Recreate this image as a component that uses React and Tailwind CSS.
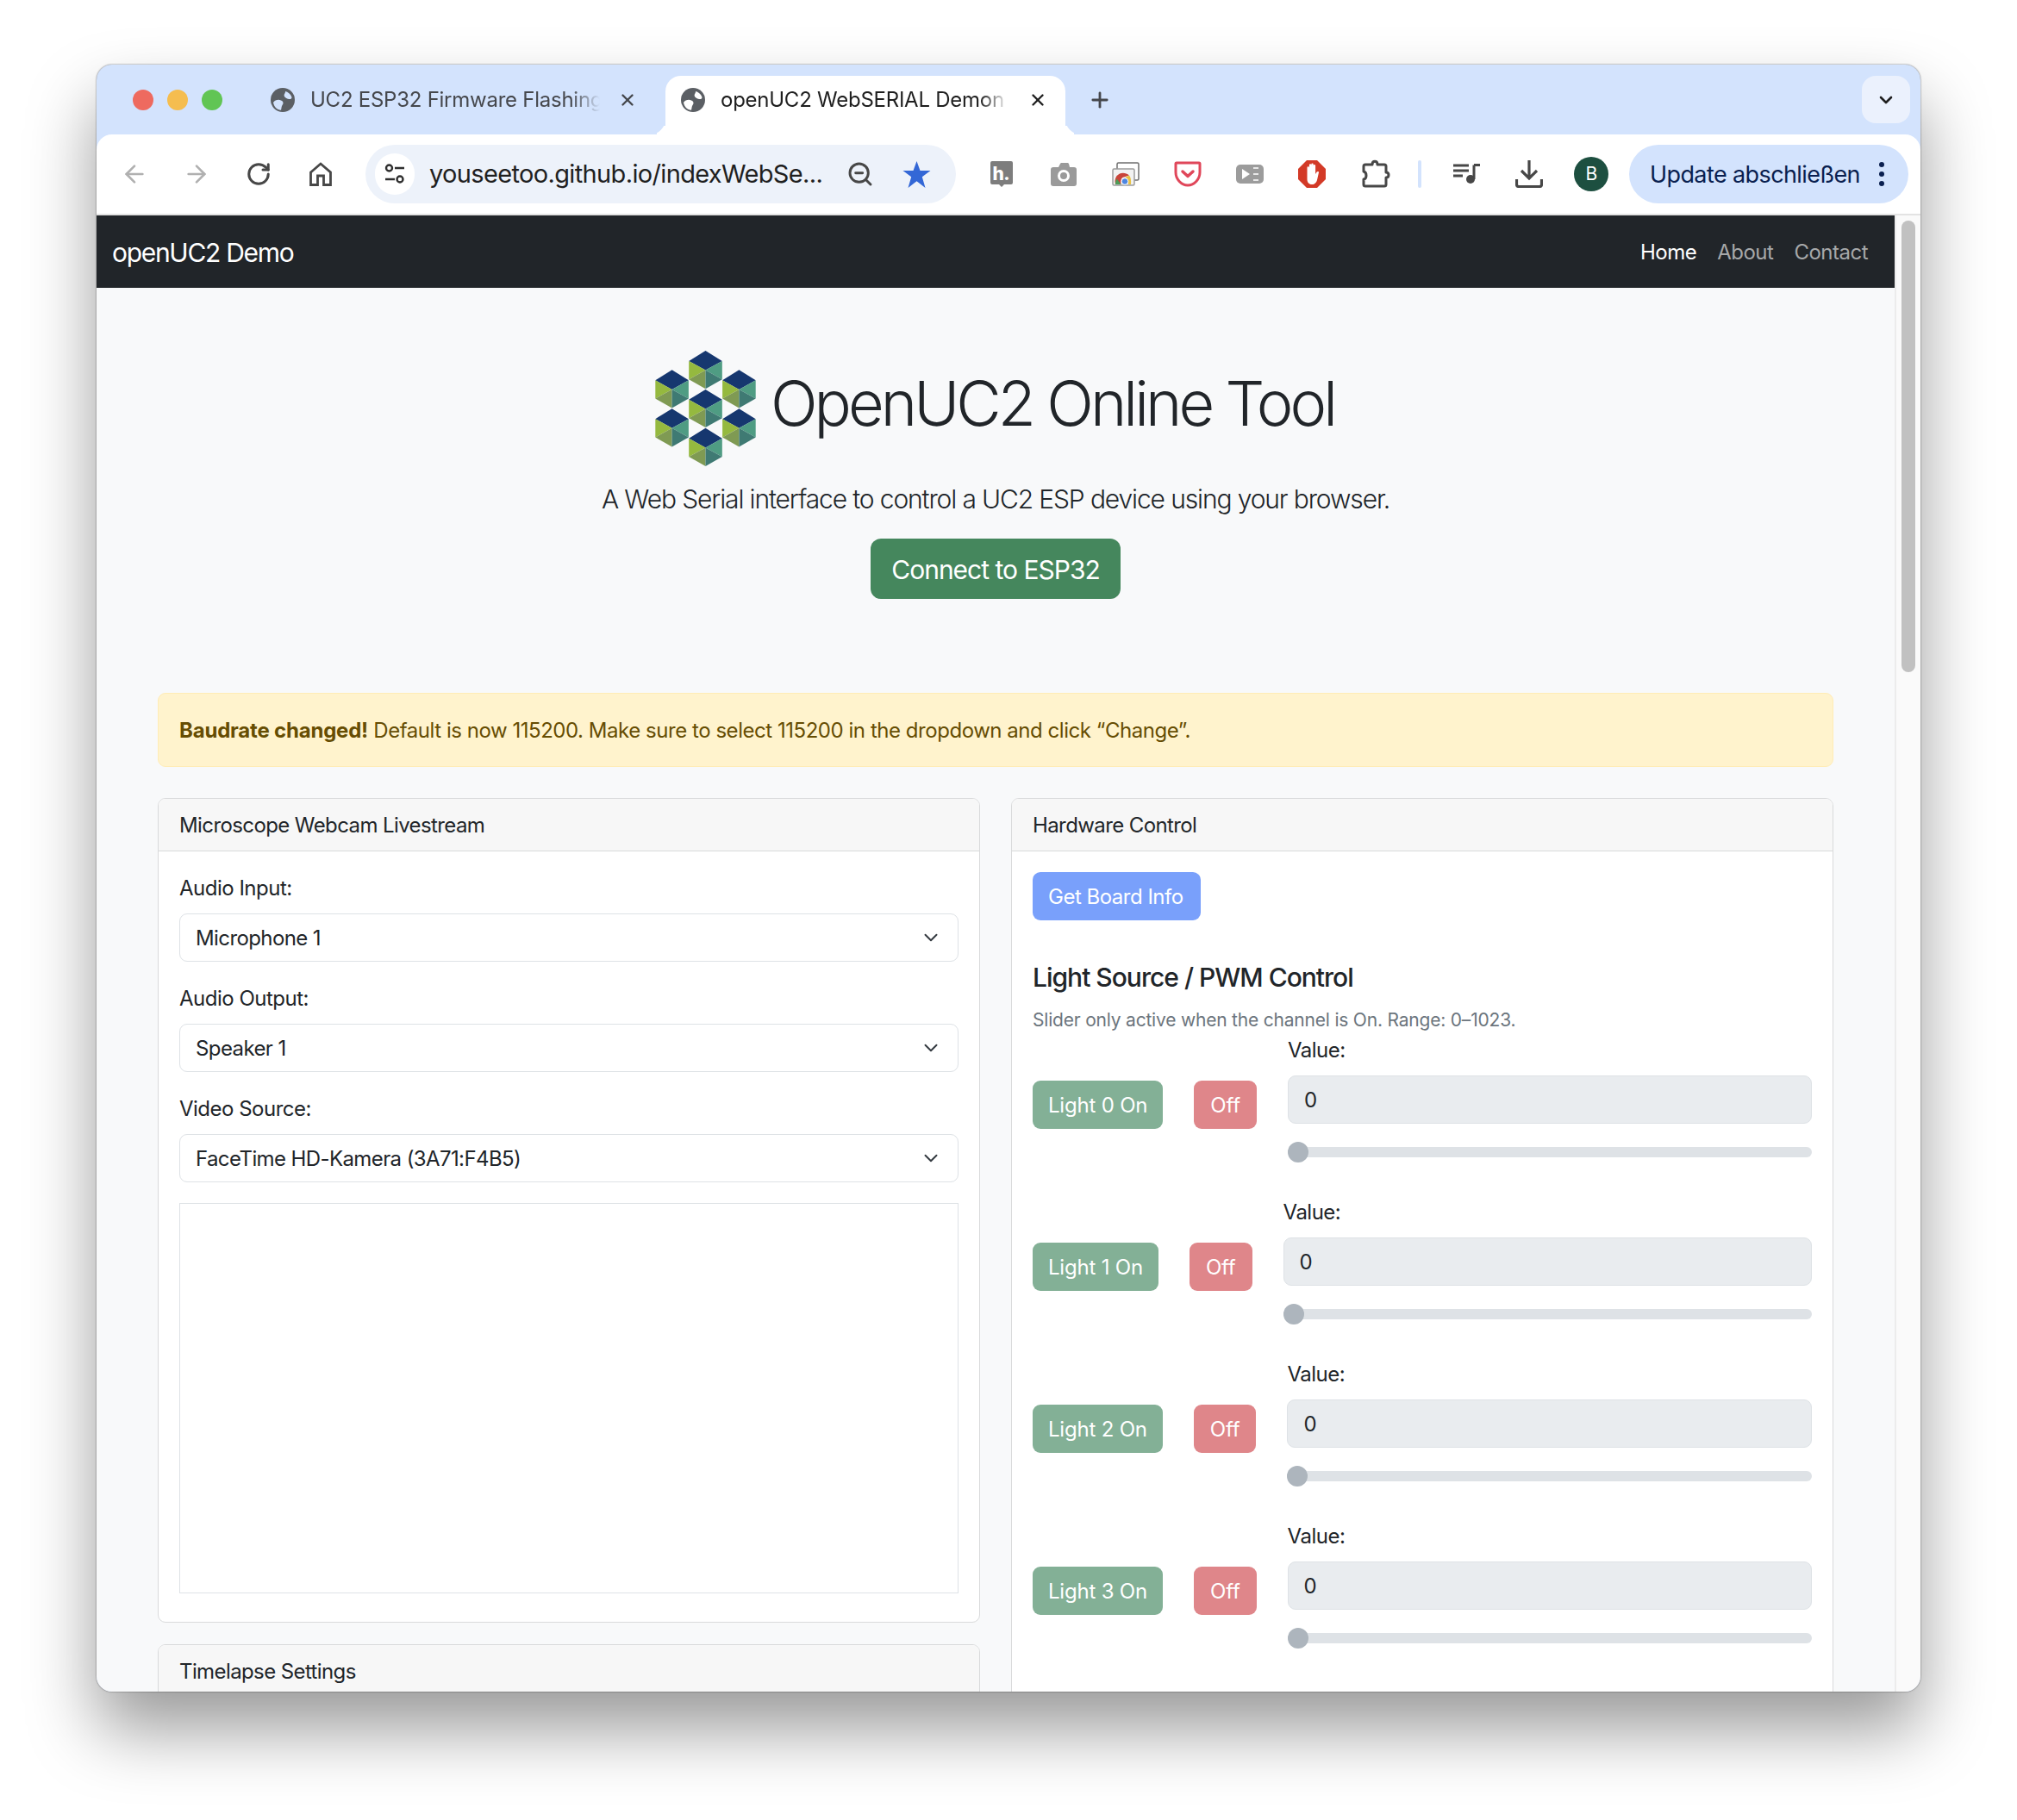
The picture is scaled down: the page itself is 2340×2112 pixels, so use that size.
import React from 'react';
import { ArrowLeft, ArrowRight, RotateCw, ChevronDown, ZoomOut, Plus, X } from 'lucide-react';

// --- browser chrome icons ---
const Globe = ({ cut }) => (
    <svg width="28" height="28" viewBox="0 0 28 28" className="shrink-0">
        <circle cx="14" cy="14" r="14" fill="#5b5f64" />
        <path d="M3 17c2-3 6-4 9-2.6 3 1.2 3 3.6 1.6 5.4-1.2 1.8-1 4-1.6 6C7.400 25.600 4 22 3 17z" fill={cut} />
        <path d="M17 4c3 .6 6 3 7.400 6.400.4 2-1.400 3-3.400 2.600-2.400-.6-5-1.800-5.400-4C15.400 7 17.400 6 17 4z" fill={cut} />
    </svg>
);

const HIcon = () => (
    <svg width="28" height="32" viewBox="0 0 28 32">
        <path d="M3 1h22a2 2 0 0 1 2 2v23a2 2 0 0 1-2 2h-8l-3 3-3-3H3a2 2 0 0 1-2-2V3a2 2 0 0 1 2-2z" fill="#7d7d7d" />
        <text x="3.500" y="23" fontSize="21" fontWeight="800" fill="#fff" fontFamily="Inter, sans-serif">h.</text>
    </svg>
);

const CameraIcon = () => (
    <svg width="30" height="28" viewBox="0 0 30 28">
        <path d="M3 6h6l2-4c.4-.8 1-1 2-1h6c1 0 1.600.4 2 1l1 4h5a3 3 0 0 1 3 3v16a3 3 0 0 1-3 3H3a3 3 0 0 1-3-3V9a3 3 0 0 1 3-3z" fill="#9a9a9a" />
        <circle cx="15" cy="16" r="5.500" fill="none" stroke="#fff" strokeWidth="3" />
    </svg>
);

const CastIcon = () => (
    <svg width="32" height="28" viewBox="0 0 32 28">
        <rect x="6" y="1" width="25" height="20" rx="1.500" fill="#fff" stroke="#6f6f6f" strokeWidth="1.500" />
        <rect x="1" y="8" width="25" height="19" rx="1.500" fill="#f2f2f2" stroke="#9c9c9c" strokeWidth="1.500" />
        <path d="M4 26a9.500 10 0 0 1 5-12.500c3-1.500 8-1 11 2l-6 2c-3 .4-4 3-3.500 8.500z" fill="#c9453a" />
        <path d="M4 26c0-3 .6-5 1.800-6.400L10.500 26z" fill="#4d9c58" />
        <path d="M20 15.500c1.800 2 2.500 6 2 10.500h-3c.4-4-.8-7-4-8z" fill="#e9c244" />
        <circle cx="15" cy="22.500" r="3.800" fill="#4d86e0" stroke="#fff" strokeWidth="1" />
    </svg>
);

const PocketIcon = () => (
    <svg width="32" height="30" viewBox="0 0 32 30">
        <path d="M3 2h26a1 1 0 0 1 1 1v10c0 8-6.500 15-14 15S2 21 2 13V3a1 1 0 0 1 1-1z" fill="#fff" stroke="#e0475a" strokeWidth="3" />
        <path d="M10 12l6 5.500 6-5.500" fill="none" stroke="#e0475a" strokeWidth="3.500" strokeLinecap="round" strokeLinejoin="round" />
    </svg>
);

const SpeedIcon = () => (
    <div className="w-[32px] h-[22px] rounded-[5px] bg-[#9c9c9c]">
        <svg width="32" height="22" viewBox="0 0 32 22">
            <path d="M7 5l9 6-9 6z" fill="#fff" />
            <rect x="20" y="3" width="6" height="2" fill="#e8e8e8" />
            <rect x="20" y="10" width="6" height="2" fill="#e8e8e8" />
            <rect x="20" y="17" width="6" height="2" fill="#e8e8e8" />
        </svg>
    </div>
);

const AdblockIcon = () => (
    <svg width="32" height="32" viewBox="0 0 32 32">
        <path d="M10 0h12l10 10v12L22 32H10L0 22V10z" fill="#d33a27" />
        <path d="M10.500 18V8.500a1.200 1.200 0 0 1 2.400 0V5.500a1.200 1.200 0 0 1 2.400 0V4.800a1.200 1.200 0 0 1 2.400 0v1.400a1.200 1.200 0 0 1 2.400 0V16l1.600-2.400c1-1.400 2.800-.6 2.200 1L22 23c-1 3.400-3.200 5-6 5-3.600 0-5.500-2.600-5.500-6z" fill="#fff" />
    </svg>
);

const PuzzleIcon = () => (
    <svg width="34" height="34" viewBox="0 0 34 34">
        <path d="M4 6h8c0-5 6-5 6 0h8a2 2 0 0 1 2 2v7c4 0 4 6 0 6v8a2 2 0 0 1-2 2H4a2 2 0 0 1-2-2v-6c4-.6 4-8 0-9V8a2 2 0 0 1 2-2z" fill="none" stroke="#474747" strokeWidth="3" strokeLinejoin="round" />
    </svg>
);

const QueueIcon = () => (
    <svg width="32" height="24" viewBox="0 0 32 24">
        <path d="M0 2h18M0 8h18M0 14h11" stroke="#474747" strokeWidth="3" />
        <path d="M24 1.500h7M24 1.500V18" stroke="#474747" strokeWidth="3" fill="none" />
        <circle cx="20" cy="18" r="5" fill="#474747" />
    </svg>
);

const DownloadIcon = () => (
    <svg width="32" height="32" viewBox="0 0 32 32">
        <path d="M16 0v20M7 12l9 9 9-9" stroke="#474747" strokeWidth="3.200" fill="none" />
        <path d="M1.500 22v6a2.500 2.500 0 0 0 2.500 2.500h24a2.500 2.500 0 0 0 2.500-2.500v-6" stroke="#474747" strokeWidth="3.200" fill="none" />
    </svg>
);

const TuneIcon = () => (
    <svg width="26" height="26" viewBox="0 0 26 26">
        <circle cx="6.500" cy="6" r="3.500" fill="none" stroke="#2f2f2f" strokeWidth="2.400" />
        <path d="M13 6h11M2 19h11" stroke="#2f2f2f" strokeWidth="2.400" />
        <circle cx="19" cy="19" r="3.500" fill="none" stroke="#2f2f2f" strokeWidth="2.400" />
    </svg>
);

const HomeIcon = () => (
    <svg width="26" height="28" viewBox="0 0 26 28">
        <path d="M1.500 12L13 2l11.500 10v14.500h-8V16h-7v10.500h-8z" fill="none" stroke="#474747" strokeWidth="2.800" />
    </svg>
);

const StarIcon = () => (
    <svg width="33" height="31" viewBox="0 0 33 31" className="ml-[33px] shrink-0">
        <path d="M16.500 0l4 11h12l-9.700 7.200L26.500 31l-10-7.800L6.500 31l3.700-12.800L.5 11h12z" fill="#3367d6" />
    </svg>
);

// --- logo: seven cubes, coordinates taken off the reference ---
const cubes = [[240, 120], [123, 187], [357, 187], [240, 255], [123, 322], [357, 322], [240, 390]];

const Logo = () => (
    <svg width="127" height="143" viewBox="50 40 380 430" className="shrink-0">
        {cubes.map(([x, y]) => (
            <g key={`${x}-${y}`}>
                <path d={`M${x} ${y - 68}L${x + 58} ${y - 32}L${x} ${y}L${x - 58} ${y - 32}Z`} fill="#16376f" />
                <path d={`M${x - 58} ${y - 32}L${x} ${y}L${x - 58} ${y + 32}Z`} fill="#95b93f" />
                <path d={`M${x - 58} ${y + 32}L${x} ${y}L${x} ${y + 65}Z`} fill="#7f9a53" />
                <path d={`M${x + 58} ${y - 32}L${x} ${y}L${x + 58} ${y + 32}Z`} fill="#4f9c83" />
                <path d={`M${x + 58} ${y + 32}L${x} ${y}L${x} ${y + 65}Z`} fill="#3f7a73" />
            </g>
        ))}
    </svg>
);

const Slot = ({ children }) => (
    <div className="w-[72px] h-full flex items-center justify-center shrink-0">{children}</div>
);

const TabStrip = () => (
    <div className="h-[81px] pt-[13px] flex shrink-0">
        <div className="flex items-center h-[55px] pl-[42px] gap-[16px] shrink-0">
            <span className="w-[24px] h-[24px] rounded-full bg-[#ee6a5f]" />
            <span className="w-[24px] h-[24px] rounded-full bg-[#f5bd4f]" />
            <span className="w-[24px] h-[24px] rounded-full bg-[#61c554]" />
        </div>
        <div className="flex items-center h-[55px] ml-[56px] shrink-0">
            <Globe cut="#d3e3fd" />
            <span className="ml-[18px] w-[336px] overflow-hidden whitespace-nowrap text-[24px] tracking-[-0.25px] text-[#45474c] [mask-image:linear-gradient(to_right,black_90%,transparent)]">
                UC2 ESP32 Firmware Flashing
            </span>
            <X size={22} strokeWidth={2.6} className="ml-[21px] text-[#45474c]" />
        </div>
        <div className="relative ml-[33px] w-[464px] h-[68px] bg-white rounded-t-[18px] shrink-0">
            <span className="absolute bottom-0 left-[-18px] w-[18px] h-[18px] rounded-br-[18px] shadow-[8px_8px_0_0_#fff]" />
            <span className="absolute bottom-0 right-[-18px] w-[18px] h-[18px] rounded-bl-[18px] shadow-[-8px_8px_0_0_#fff]" />
            <div className="flex items-center h-[55px] pl-[18px]">
                <Globe cut="#fff" />
                <span className="ml-[18px] w-[334px] overflow-hidden whitespace-nowrap text-[24px] tracking-[-0.25px] text-[#1f1f1f] [mask-image:linear-gradient(to_right,black_90%,transparent)]">
                    openUC2 WebSERIAL Demon
                </span>
                <X size={22} strokeWidth={2.6} className="ml-[23px] text-[#1f1f1f]" />
            </div>
        </div>
        <div className="flex items-center h-[55px] ml-[26px] shrink-0">
            <Plus size={28} strokeWidth={2.4} className="text-[#45474c]" />
        </div>
        <div className="ml-auto mr-[12px] w-[56px] h-[55px] rounded-[16px] bg-[#ebf1fd] flex items-center justify-center shrink-0">
            <ChevronDown size={24} strokeWidth={2.6} className="text-[#1f1f1f]" />
        </div>
    </div>
);

const Toolbar = () => (
    <div className="relative z-10 h-[94px] bg-white rounded-t-[18px] border-b-2 border-[#e3e3e3] pl-[8px] flex items-center shrink-0">
        <Slot><ArrowLeft size={32} strokeWidth={2} className="text-[#b0b0b0]" /></Slot>
        <Slot><ArrowRight size={32} strokeWidth={2} className="text-[#b0b0b0]" /></Slot>
        <Slot><RotateCw size={30} strokeWidth={2.4} className="text-[#474747]" /></Slot>
        <Slot><HomeIcon /></Slot>
        <div className="ml-[16px] w-[685px] h-[68px] rounded-full bg-[#edf2fa] flex items-center pl-[11px] shrink-0">
            <div className="w-[46px] h-[48px] rounded-full bg-white flex items-center justify-center shrink-0">
                <TuneIcon />
            </div>
            <span className="ml-[17px] w-[455px] whitespace-nowrap text-[29px] tracking-[-0.65px] text-[#1f1f1f]">youseetoo.github.io/indexWebSe...</span>
            <ZoomOut size={32} strokeWidth={2.2} className="ml-[29px] text-[#474747] shrink-0" />
            <StarIcon />
        </div>
        <div className="ml-[17px] flex items-center h-full">
            <Slot><HIcon /></Slot>
            <Slot><CameraIcon /></Slot>
            <Slot><CastIcon /></Slot>
            <Slot><PocketIcon /></Slot>
            <Slot><SpeedIcon /></Slot>
            <Slot><AdblockIcon /></Slot>
            <div className="pl-[3px]"><Slot><PuzzleIcon /></Slot></div>
            <span className="ml-[12px] mr-[17px] w-[4px] h-[32px] rounded-full bg-[#d3e3fd] shrink-0" />
            <Slot><QueueIcon /></Slot>
            <Slot><DownloadIcon /></Slot>
            <Slot>
                <div className="w-[40px] h-[40px] rounded-full bg-[#1d4f40] text-white text-[21px] flex items-center justify-center">B</div>
            </Slot>
        </div>
        <div className="ml-[8px] w-[324px] h-[68px] rounded-full bg-[#d3e3fd] flex items-center pl-[24px] shrink-0">
            <span className="w-[244px] pt-[2px] whitespace-nowrap text-[27px] tracking-[-0.6px] text-[#0a1f50]">Update abschließen</span>
            <div className="ml-[22px] flex flex-col gap-[5px]">
                <span className="w-[6px] h-[6px] rounded-full bg-[#0a1f50]" />
                <span className="w-[6px] h-[6px] rounded-full bg-[#0a1f50]" />
                <span className="w-[6px] h-[6px] rounded-full bg-[#0a1f50]" />
            </div>
        </div>
    </div>
);

const Navbar = () => (
    <nav className="h-[84px] bg-[#212529] flex items-center pl-[18px] pr-[31px] pt-[2px] shrink-0">
        <span className="text-[30px] tracking-[-1.3px] text-white">openUC2 Demo</span>
        <div className="ml-auto flex gap-[24px] text-[24px] text-[#a6a8a9]">
            <span className="text-white">Home</span>
            <span>About</span>
            <span>Contact</span>
        </div>
    </nav>
);

const Card = ({ title, children, className }) => (
    <div className={`rounded-[9px] border-[1.5px] border-[#d9dadb] bg-white overflow-hidden ${className}`}>
        <div className="h-[61px] pt-[2px] bg-[#f7f7f7] border-b-[1.5px] border-[#d9dadb] flex items-center px-[24px] text-[24px] tracking-[-0.6px] text-[#212529]">
            {title}
        </div>
        {children}
    </div>
);

const devices = [
    { label: 'Audio Input:', value: 'Microphone 1' },
    { label: 'Audio Output:', value: 'Speaker 1' },
    { label: 'Video Source:', value: 'FaceTime HD-Kamera (3A71:F4B5)' },
];

const Webcam = () => (
    <Card title="Microscope Webcam Livestream" className="h-[957px] shrink-0">
        <div className="px-[24px] pt-[24px]">
            {devices.map((d) => (
                <div key={d.label} className="mb-[24px]">
                    <div className="h-[36px] mb-[12px] pt-[1px] leading-[36px] text-[24px] text-[#212529]">{d.label}</div>
                    <div className="h-[56px] rounded-[9px] border-[1.5px] border-[#dee2e6] flex items-center pl-[18px] pr-[18px] text-[24px] tracking-[-0.6px] text-[#212529]">
                        <span className="pt-[2px]">{d.value}</span>
                        <ChevronDown size={26} strokeWidth={1.8} className="ml-auto text-[#343a40]" />
                    </div>
                </div>
            ))}
            <div className="h-[453px] border-[1.5px] border-[#dee2e6] bg-white" />
        </div>
    </Card>
);

const lights = ['Light 0 On', 'Light 1 On', 'Light 2 On', 'Light 3 On'];

const LightRow = ({ name }) => (
    <div className="flex items-center gap-[36px] mb-[24px]">
        <button className="h-[56px] px-[18px] pt-[2px] rounded-[9px] bg-[#83b096] text-white text-[24px] tracking-[-0.2px] whitespace-nowrap shrink-0">{name}</button>
        <button className="h-[56px] px-[19px] pt-[2px] rounded-[9px] bg-[#df868a] text-white text-[24px] tracking-[-0.2px] shrink-0">Off</button>
        <div className="flex-1">
            <div className="h-[36px] mb-[12px] pt-[1px] leading-[36px] text-[24px] text-[#212529]">Value:</div>
            <div className="h-[56px] pt-[2px] rounded-[9px] border-[1.5px] border-[#dee2e6] bg-[#e9ecef] flex items-center pl-[18px] text-[24px] text-[#212529]">0</div>
            <div className="relative mt-[27px] mb-[21px] h-[12px] rounded-full bg-[#dee2e6]">
                <span className="absolute left-0 top-[-6px] w-[24px] h-[24px] rounded-full bg-[#adb5bd]" />
            </div>
        </div>
    </div>
);

const Hardware = () => (
    <Card title="Hardware Control" className="flex-1 h-[1100px]">
        <div className="px-[24px] pt-[24px]">
            <button className="h-[56px] pl-[18px] pr-[20px] pt-[2px] rounded-[9px] bg-[#79a0fb] text-white text-[24px] block">Get Board Info</button>
            <h5 className="mt-[48px] mb-[16px] h-[36px] leading-[36px] text-[30px] tracking-[-1px] font-medium text-[#212529]">Light Source / PWM Control</h5>
            <p className="h-[32px] leading-[32px] text-[21px] tracking-[-0.2px] text-[#6c757d]">Slider only active when the channel is On. Range: 0–1023.</p>
            {lights.map((l) => <LightRow key={l} name={l} />)}
        </div>
    </Card>
);

const App = () => (
    <div className="w-[2340px] h-[2112px] bg-white pt-[75px] pl-[112px] overflow-hidden tracking-[-0.5px] [font-family:Inter,sans-serif]">
        <div className="w-[2116px] h-[1888px] rounded-[18px] overflow-hidden bg-[#d3e3fd] flex flex-col shadow-[0_44px_80px_rgba(0,0,0,0.4),0_0_2px_rgba(0,0,0,0.6)]">
            <TabStrip />
            <Toolbar />
            <div className="flex flex-1 min-h-0">
                <div className="w-[2086px] bg-[#f8f9fa] flex flex-col overflow-hidden">
                    <Navbar />
                    {/* hero */}
                    <div className="flex flex-col items-center pt-[69px] shrink-0">
                        <div className="flex items-center gap-[12px] h-[143px] mr-[7px]">
                            <Logo />
                            <h1 className="pb-[14px] text-[72px] tracking-[-3.95px] font-light text-[#212529] whitespace-nowrap">OpenUC2 Online Tool</h1>
                        </div>
                        <p className="mt-[11px] h-[45px] leading-[45px] text-[30px] tracking-[-1.13px] font-light text-[#212529]">A Web Serial interface to control a UC2 ESP device using your browser.</p>
                        <button className="mt-[23px] pt-[2px] w-[290px] h-[70px] rounded-[12px] bg-[#45875d] text-white text-[30px] tracking-[-1px]">Connect to ESP32</button>
                    </div>
                    <div className="mx-[71px] mt-[109px] pt-[2px] h-[86px] rounded-[9px] border-[1.5px] border-[#ffecb5] bg-[#fff3cd] flex items-center px-[24px] text-[24px] tracking-[-0.46px] text-[#664d03] shrink-0">
                        <span><b className="font-bold tracking-[-0.2px]">Baudrate changed!</b> Default is now 115200. Make sure to select 115200 in the dropdown and click “Change”.</span>
                    </div>
                    <div className="mx-[71px] mt-[36px] flex gap-[36px] items-start">
                        <div className="w-[954px] flex flex-col gap-[25px] shrink-0">
                            <Webcam />
                            <Card title="Timelapse Settings" className="h-[200px] shrink-0" />
                        </div>
                        <Hardware />
                    </div>
                </div>
                <div className="w-[30px] bg-[#fafafa] border-l-2 border-[#ececec] pt-[6px] pl-[6px]">
                    <div className="w-[16px] h-[524px] rounded-full bg-[#c1c1c1]" />
                </div>
            </div>
        </div>
    </div>
);

export default App;
